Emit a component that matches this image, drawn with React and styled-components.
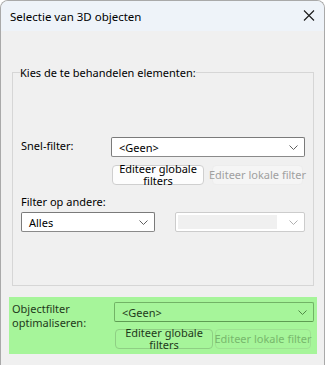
import styled, { createGlobalStyle, css } from 'styled-components';

const GlobalStyle = createGlobalStyle`
  html, body {
    margin: 0;
    padding: 0;
    background: #ffffff;
  }
  body {
    font-family: 'Noto Sans', 'Open Sans', sans-serif;
    font-size: 11px;
    color: #000;
  }
`;

const Window = styled.div`
  width: 325px;
  height: 365px;
  box-sizing: border-box;
  border: 1px solid #a9a9a9;
  border-bottom: none;
  border-radius: 8px 8px 0 0;
  background: #f0f0f0;
  overflow: hidden;
  display: flex;
  flex-direction: column;
`;

const TitleBar = styled.div`
  height: 30px;
  flex: none;
  display: flex;
  align-items: center;
  justify-content: space-between;
  padding: 0 8px 0 9px;
  background: #eef3f9;
  font-size: 11.5px;
`;

const CloseButton = styled.span`
  display: flex;
  width: 14px;
  height: 14px;
`;

const Body = styled.div`
  flex: 1;
  padding: 34px 10px 0 11px;
  display: flex;
  flex-direction: column;
`;

const GroupBox = styled.fieldset`
  margin: 0;
  padding: 0 8px 53px 8px;
  border: 1px solid #d6d6d6;
  min-width: 0;

  legend {
    padding: 0;
    margin-left: -1px;
    font-size: 11px;
    line-height: 15px;
  }
`;

const Spacer = styled.div`
  height: ${p => p.$h}px;
`;

const FieldRow = styled.div`
  display: grid;
  grid-template-columns: ${p => p.$label || 90}px 1fr;
  align-items: start;
  height: 20px;
`;

const Label = styled.div`
  font-size: 11px;
  line-height: ${p => (p.$tint ? 14 : 15)}px;
  padding-top: ${p => (p.$tint ? 0 : 1)}px;
  color: ${p => (p.$tint ? '#1f3a1a' : '#000')};
`;

const Combo = styled.div`
  height: 20px;
  box-sizing: border-box;
  border: 1px solid ${p => (p.$tint ? '#72b366' : p.$disabled ? '#cccccc' : '#7a7a7a')};
  border-bottom-color: ${p => (p.$tint ? '#5e9c53' : p.$disabled ? '#cccccc' : '#8a8a8a')};
  border-radius: 2px;
  background: ${p => (p.$tint ? 'transparent' : '#ffffff')};
  display: flex;
  align-items: center;
  padding: 0 6px 0 ${p => (p.$disabled ? 2 : 7)}px;
  font-size: 11px;
  color: ${p => (p.$tint ? '#1f3a1a' : '#000')};
  width: ${p => (p.$w ? `${p.$w}px` : 'auto')};
`;

const ComboText = styled.span`
  flex: 1;
  white-space: nowrap;
`;

const DisabledFill = styled.span`
  flex: 1;
  height: 14px;
  background: #f0f0f0;
  margin-right: 12px;
`;

const ButtonRow = styled.div`
  display: flex;
  gap: ${p => p.$gap || 8}px;
  margin-left: ${p => p.$indent || 0}px;
`;

const Button = styled.div`
  width: ${p => p.$w}px;
  height: 20px;
  box-sizing: border-box;
  border-radius: 4px;
  display: flex;
  align-items: center;
  justify-content: center;
  text-align: center;
  font-size: 11px;
  line-height: 12px;
  white-space: nowrap;
  ${p =>
    p.$disabled
      ? css`
          border: 1px solid ${p.$tint ? '#9ee292' : '#ededed'};
          background: ${p.$tint ? 'transparent' : '#f5f5f5'};
          color: ${p.$tint ? '#78b86d' : '#a0a0a0'};
        `
      : css`
          border: 1px solid ${p.$tint ? '#8fcf84' : '#cfcfcf'};
          background: ${p.$tint ? 'transparent' : '#fdfdfd'};
          color: ${p.$tint ? '#1f3a1a' : '#000'};
        `}
`;

const TwoCombos = styled.div`
  display: flex;
  justify-content: space-between;
`;

const Highlight = styled.div`
  margin: 11px -3px 0 -3px;
  height: 57px;
  background: #a6f59a;
  padding: 5px 3px 0 3px;
  box-sizing: border-box;
  display: flex;
  flex-direction: column;
  gap: 7px;
`;

function Chevron({ color = '#606060' }) {
  return (
    <svg width="9" height="5" viewBox="0 0 9 5">
      <polyline points="0.5,0.5 4.5,4.5 8.5,0.5" fill="none" stroke={color} strokeWidth="1" />
    </svg>
  );
}

function App() {
  return (
    <>
      <GlobalStyle />
      <Window>
        <TitleBar>
          <span>Selectie van 3D objecten</span>
          <CloseButton>
            <svg width="14" height="14" viewBox="0 0 14 14">
              <path d="M2 1.5 L12 11.5 M12 1.5 L2 11.5" stroke="#1a1a1a" strokeWidth="1.1" fill="none" />
            </svg>
          </CloseButton>
        </TitleBar>
        <Body>
          <GroupBox>
            <legend>Kies de te behandelen elementen:</legend>
            <Spacer $h={57} />
            <FieldRow>
              <Label>Snel-filter:</Label>
              <Combo>
                <ComboText>&lt;Geen&gt;</ComboText>
                <Chevron />
              </Combo>
            </FieldRow>
            <Spacer $h={8} />
            <ButtonRow $indent={91}>
              <Button $w={92}>
                Editeer globale
                <br />
                filters
              </Button>
              <Button $w={91} $disabled>
                Editeer lokale filter
              </Button>
            </ButtonRow>
            <Spacer $h={8} />
            <Label>Filter op andere:</Label>
            <Spacer $h={3} />
            <TwoCombos>
              <Combo $w={134}>
                <ComboText>Alles</ComboText>
                <Chevron />
              </Combo>
              <Combo $w={130} $disabled>
                <DisabledFill />
                <Chevron color="#b0b0b0" />
              </Combo>
            </TwoCombos>
          </GroupBox>
          <Highlight>
            <FieldRow $label={102}>
              <Label $tint>
                Objectfilter
                <br />
                optimaliseren:
              </Label>
              <Combo $tint>
                <ComboText>&lt;Geen&gt;</ComboText>
                <Chevron color="#4f8a46" />
              </Combo>
            </FieldRow>
            <ButtonRow $indent={103} $gap={2}>
              <Button $w={98} $tint>
                Editeer globale
                <br />
                filters
              </Button>
              <Button $w={96} $tint $disabled>
                Editeer lokale filter
              </Button>
            </ButtonRow>
          </Highlight>
        </Body>
      </Window>
    </>
  );
}

export default App;
